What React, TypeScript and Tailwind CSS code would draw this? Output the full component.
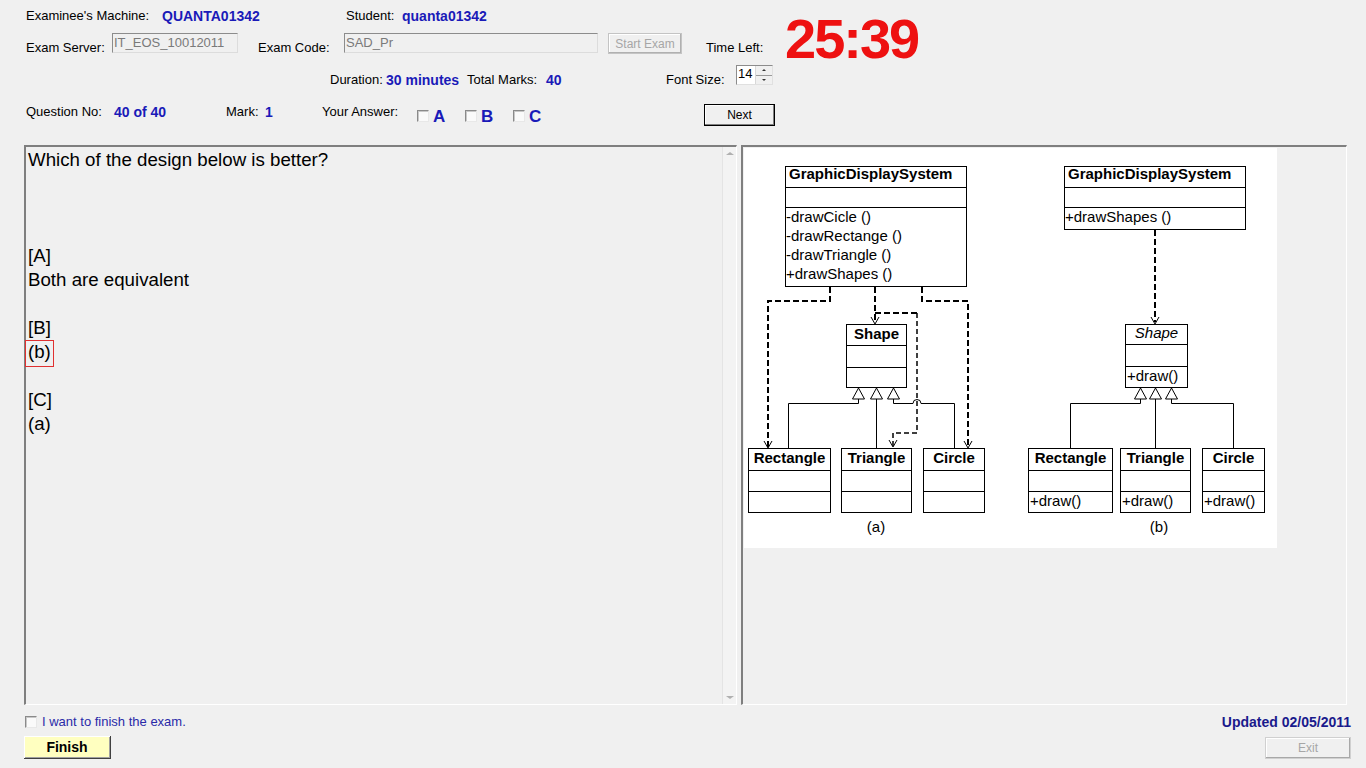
import React from "react";

const BLUE = "text-[#1a1ab8]";

function CheckBox() {
  return (
    <div className="w-[12px] h-[12px] border border-t-[#8a8a8a] border-l-[#8a8a8a] border-r-[#e8e8e8] border-b-[#e8e8e8] bg-[#fafafa] shadow-[inset_1px_1px_0_#c8c8c8]" />
  );
}

function Diagram() {
  const arrow = (x: number, y: number) => (
    <polyline points={`${x - 4},${y - 7} ${x},${y} ${x + 4},${y - 7}`} fill="none" stroke="#000" strokeWidth={1} />
  );
  const tri = (cx: number) => (
    <polygon points={`${cx},240 ${cx - 6},251 ${cx + 6},251`} fill="#fff" stroke="#000" strokeWidth={1} />
  );
  const cls = (x: number, w: number, name: string, method?: string) => (
    <g>
      <rect x={x + 0.5} y={300.5} width={w} height={64} fill="#fff" stroke="#000" />
      <line x1={x} x2={x + w} y1={322.5} y2={322.5} stroke="#000" />
      <line x1={x} x2={x + w} y1={343.5} y2={343.5} stroke="#000" />
      <text x={x + w / 2 + 0.5} y={315} textAnchor="middle" fontWeight="bold" fontSize={15}>
        {name}
      </text>
      {method && (
        <text x={x + 2} y={358} fontSize={15}>
          {method}
        </text>
      )}
    </g>
  );
  return (
    <svg width={533} height={400} viewBox="0 0 533 400" className="block bg-white" style={{ fontFamily: "'Liberation Sans', Arial, sans-serif" }}>
      {/* (a) GraphicDisplaySystem */}
      <rect x={41.5} y={18.5} width={181} height={120} fill="#fff" stroke="#000" />
      <line x1={41} x2={222} y1={39.5} y2={39.5} stroke="#000" />
      <line x1={41} x2={222} y1={59.5} y2={59.5} stroke="#000" />
      <text x={45} y={31} fontWeight="bold" fontSize={15}>GraphicDisplaySystem</text>
      <text x={42} y={74} fontSize={15}>-drawCicle ()</text>
      <text x={42} y={93} fontSize={15}>-drawRectange ()</text>
      <text x={42} y={112} fontSize={15}>-drawTriangle ()</text>
      <text x={42} y={131} fontSize={15}>+drawShapes ()</text>

      {/* (a) dashed dependencies */}
      <g fill="none" stroke="#000" strokeWidth={2} strokeDasharray="6 3">
        <path d="M86 139 V153 H24 V299" />
        <path d="M131 139 V174" />
        <path d="M131 165 H173" />
        <path d="M178 139 V153 H224 V299" />
      </g>
      <path d="M173 165 V285 H149 V298" fill="none" stroke="#000" strokeWidth={1.5} strokeDasharray="5 3" />
      {arrow(24, 300)}
      {arrow(131, 176)}
      {arrow(149, 299)}
      {arrow(224, 300)}

      {/* (a) Shape */}
      <rect x={102.5} y={176.5} width={60} height={63} fill="#fff" stroke="#000" />
      <line x1={102} x2={162} y1={197.5} y2={197.5} stroke="#000" />
      <line x1={102} x2={162} y1={219.5} y2={219.5} stroke="#000" />
      <text x={132.5} y={191} textAnchor="middle" fontWeight="bold" fontSize={15}>Shape</text>

      {/* (a) inheritance */}
      <g fill="none" stroke="#000" strokeWidth={1}>
        <path d="M114.5 251 V255.5 H44.5 V300" />
        <path d="M132.5 251 V300" />
        <path d="M149.5 251 V255.5 H169 A4 4 0 0 1 177 255.5 H210.5 V300" />
      </g>
      {tri(114.5)}
      {tri(132.5)}
      {tri(149.5)}

      {cls(4, 82, "Rectangle")}
      {cls(97, 70, "Triangle")}
      {cls(179, 61, "Circle")}
      <text x={132} y={384} textAnchor="middle" fontSize={15}>(a)</text>

      {/* (b) GraphicDisplaySystem */}
      <rect x={320.5} y={18.5} width={181} height={63} fill="#fff" stroke="#000" />
      <line x1={320} x2={501} y1={39.5} y2={39.5} stroke="#000" />
      <line x1={320} x2={501} y1={59.5} y2={59.5} stroke="#000" />
      <text x={324} y={31} fontWeight="bold" fontSize={15}>GraphicDisplaySystem</text>
      <text x={321} y={74} fontSize={15}>+drawShapes ()</text>

      <path d="M411 82 V174" fill="none" stroke="#000" strokeWidth={2} strokeDasharray="6 3" />
      {arrow(411, 176)}

      {/* (b) Shape */}
      <rect x={381.5} y={176.5} width={62} height={63} fill="#fff" stroke="#000" />
      <line x1={381} x2={443} y1={196.5} y2={196.5} stroke="#000" />
      <line x1={381} x2={443} y1={218.5} y2={218.5} stroke="#000" />
      <text x={412.5} y={190} textAnchor="middle" fontStyle="italic" fontSize={15}>Shape</text>
      <text x={383} y={233} fontSize={15}>+draw()</text>

      <g fill="none" stroke="#000" strokeWidth={1}>
        <path d="M396.5 251 V255.5 H326.5 V300" />
        <path d="M411.5 251 V300" />
        <path d="M427.5 251 V255.5 H489.5 V300" />
      </g>
      {tri(396.5)}
      {tri(411.5)}
      {tri(427.5)}

      {cls(284, 84, "Rectangle", "+draw()")}
      {cls(376, 70, "Triangle", "+draw()")}
      {cls(458, 62, "Circle", "+draw()")}
      <text x={415} y={384} textAnchor="middle" fontSize={15}>(b)</text>
    </svg>
  );
}

function Header() {
  return (
    <div className="h-[145px] pl-[26px] flex flex-col">
      <div className="flex h-[94px]">
        <div className="w-[759px] flex flex-col">
          {/* Row 1 */}
          <div className="flex items-start h-[28px] leading-[16px]">
            <span className="mt-[8px] w-[136px]">Examinee's Machine:</span>
            <span className={`mt-[8px] w-[184px] font-bold text-[14px] ${BLUE}`}>QUANTA01342</span>
            <span className="mt-[8px] w-[56px]">Student:</span>
            <span className={`mt-[8px] font-bold text-[14px] ${BLUE}`}>quanta01342</span>
          </div>
          {/* Row 2 */}
          <div className="flex items-start h-[30px] leading-[16px]">
            <span className="mt-[12px] w-[86px]">Exam Server:</span>
            <div className="mt-[5px] w-[126px] h-[20px] border border-t-[#8c8c8c] border-l-[#8c8c8c] border-r-[#dcdcdc] border-b-[#dcdcdc] bg-[#f0f0f0] pl-[1px] flex items-center text-[#7a7a7a]">
              IT_EOS_10012011
            </div>
            <div className="w-[20px]" />
            <span className="mt-[12px] w-[86px]">Exam Code:</span>
            <div className="mt-[5px] w-[254px] h-[20px] border border-t-[#8c8c8c] border-l-[#8c8c8c] border-r-[#dcdcdc] border-b-[#dcdcdc] bg-[#f0f0f0] pl-[1px] flex items-center text-[#7a7a7a]">
              SAD_Pr
            </div>
            <div className="w-[10px]" />
            <div className="mt-[5px] w-[74px] h-[21px] border border-[#c4c4c4] shadow-[inset_-1px_-1px_0_#b0b0b0,inset_1px_1px_0_#ffffff] flex items-center justify-center text-[12px] text-[#a6a6a6]">
              Start Exam
            </div>
            <div className="w-[24px]" />
            <span className="mt-[12px]">Time Left:</span>
          </div>
          {/* Row 3 */}
          <div className="flex items-start h-[36px] leading-[16px]">
            <div className="w-[304px]" />
            <span className="mt-[14px] w-[56px]">Duration:</span>
            <span className={`mt-[14px] w-[81px] font-bold text-[14px] ${BLUE}`}>30 minutes</span>
            <span className="mt-[14px] w-[79px]">Total Marks:</span>
            <span className={`mt-[14px] w-[120px] font-bold text-[14px] ${BLUE}`}>40</span>
            <span className="mt-[14px] w-[70px]">Font Size:</span>
            <div className="mt-[7px] w-[37px] h-[20px] border border-t-[#8c8c8c] border-l-[#8c8c8c] border-r-[#e0e0e0] border-b-[#e0e0e0] bg-white flex">
              <span className="flex-1 pl-[1px] leading-[15px] text-[13px]">14</span>
              <div className="w-[17px] flex flex-col bg-[#f0f0f0] border-l border-[#d8d8d8]">
                <div className="flex-1 flex items-center justify-center border-b border-[#9a9a9a]">
                  <div className="w-0 h-0 border-l-[2px] border-r-[2px] border-b-[2px] border-l-transparent border-r-transparent border-b-[#333]" />
                </div>
                <div className="flex-1 flex items-center justify-center">
                  <div className="w-0 h-0 border-l-[2px] border-r-[2px] border-t-[2px] border-l-transparent border-r-transparent border-t-[#333]" />
                </div>
              </div>
            </div>
          </div>
        </div>
        <span className="mt-[11px] font-bold text-[56px] leading-none tracking-[-2px] text-[#ee1111]">25:39</span>
      </div>
      {/* Row 4 */}
      <div className="flex items-start mt-[10px] leading-[16px]">
        <span className="w-[88px]">Question No:</span>
        <span className={`w-[112px] font-bold text-[14px] ${BLUE}`}>40 of 40</span>
        <span className="w-[39px]">Mark:</span>
        <span className={`w-[57px] font-bold text-[14px] ${BLUE}`}>1</span>
        <span className="w-[95px]">Your Answer:</span>
        <div className="w-[287px] flex">
          {["A", "B", "C"].map((l) => (
            <div key={l} className="w-[48px] flex items-start">
              <div className="mt-[6px]">
                <CheckBox />
              </div>
              <span className={`ml-[4px] mt-[3px] leading-[20px] font-bold text-[17px] ${BLUE}`}>{l}</span>
            </div>
          ))}
        </div>
        <div className="w-[71px] h-[22px] border border-black bg-[#f0f0f0] shadow-[inset_-1px_-1px_0_#808080,inset_1px_1px_0_#ffffff] flex items-center justify-center text-[12px]">
          Next
        </div>
      </div>
    </div>
  );
}

function Main() {
  const line = "h-[24px] whitespace-nowrap";
  return (
    <div className="flex h-[560px] pl-[24px] gap-[4px]">
      <div className="w-[713px] h-full flex border-t-2 border-l-2 border-r border-b border-t-[#7f7f7f] border-l-[#7f7f7f] border-r-white border-b-white">
        <div className="flex-1 pl-[2px] pt-[1px] text-[18.7px] leading-[24px]">
          <div className={line}>Which of the design below is better?</div>
          <div className={line} />
          <div className={line} />
          <div className={line} />
          <div className={line}>[A]</div>
          <div className={line}>Both are equivalent</div>
          <div className={line} />
          <div className={line}>[B]</div>
          <div className={line}>
            <span className="-ml-[3px] px-[2px] pb-[4px] border border-[#e03030]">(b)</span>
          </div>
          <div className={line} />
          <div className={line}>[C]</div>
          <div className={line}>(a)</div>
        </div>
        <div className="w-[14px] h-full bg-[#f3f3f3] border-l border-[#e4e4e4] flex flex-col justify-between items-center py-[5px]">
          <div className="w-0 h-0 border-l-[4px] border-r-[4px] border-b-[3px] border-l-transparent border-r-transparent border-b-[#b0b0b0]" />
          <div className="w-0 h-0 border-l-[4px] border-r-[4px] border-t-[3px] border-l-transparent border-r-transparent border-t-[#b0b0b0]" />
        </div>
      </div>
      <div className="w-[606px] h-full border-t-2 border-l-2 border-r border-b border-t-[#7f7f7f] border-l-[#7f7f7f] border-r-white border-b-white p-[1px]">
        <Diagram />
      </div>
    </div>
  );
}

function Footer() {
  return (
    <div className="flex flex-col pl-[24px] pr-[15px]">
      <div className="mt-[9px] h-[16px] flex items-center justify-between">
        <div className="flex items-center">
          <div className="ml-[1px]">
            <CheckBox />
          </div>
          <span className="ml-[5px] text-[#2a2aa8]">I want to finish the exam.</span>
        </div>
        <span className="font-bold text-[14px] text-[#1a1a8c]">Updated 02/05/2011</span>
      </div>
      <div className="mt-[6px] flex items-start justify-between">
        <div className="w-[87px] h-[23px] bg-[#ffffc0] border-r border-b border-[#404040] shadow-[inset_1px_1px_0_#ffffff,inset_-1px_-1px_0_#a0a0a0] flex items-center justify-center font-bold text-[14px]">
          Finish
        </div>
        <div className="mt-[1px] w-[86px] h-[22px] border border-[#d0d0d0] shadow-[inset_-1px_-1px_0_#a8a8a8,inset_1px_1px_0_#ffffff] flex items-center justify-center text-[12px] text-[#a6a6a6]">
          Exit
        </div>
      </div>
    </div>
  );
}

export default function App() {
  return (
    <div className="w-[1366px] h-[768px] bg-[#f0f0f0] font-['Liberation_Sans',Arial,sans-serif] text-[13px] text-black overflow-hidden flex flex-col">
      <Header />
      <Main />
      <Footer />
    </div>
  );
}
